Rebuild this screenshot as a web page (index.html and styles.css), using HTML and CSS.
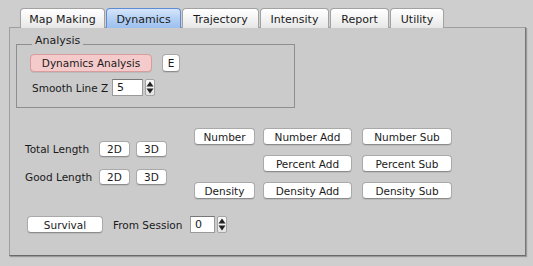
FILE: index.html
```html
<!DOCTYPE html>
<html>
<head>
<meta charset="utf-8">
<link rel="stylesheet" href="styles.css">
</head>
<body>
<div class="tabs">
  <div class="tab w-map">Map Making</div>
  <div class="tab sel w-dyn">Dynamics</div>
  <div class="tab w-traj">Trajectory</div>
  <div class="tab w-int">Intensity</div>
  <div class="tab w-rep">Report</div>
  <div class="tab w-util">Utility</div>
</div>
<div class="panel">
  <fieldset class="group">
    <legend>Analysis</legend>
    <div class="row r-analysis">
      <div class="btn pink w-da">Dynamics Analysis</div>
      <div class="btn w-e">E</div>
    </div>
    <div class="row r-smooth">
      <span class="lbl">Smooth Line Z</span>
      <div class="input w-in1">5</div>
      <div class="stepper"><svg width="8" height="15" viewBox="0 0 8 15"><path d="M4 1.5 L7.5 6.5 L0.5 6.5 Z" fill="#222"/><path d="M4 13.5 L7.5 8.5 L0.5 8.5 Z" fill="#222"/></svg></div>
    </div>
  </fieldset>
  <div class="mid">
    <div class="lengths">
      <div class="lrow"><span class="lbl w-lbl">Total Length</span><div class="btn sm">2D</div><div class="btn sm">3D</div></div>
      <div class="lrow"><span class="lbl w-lbl">Good Length</span><div class="btn sm">2D</div><div class="btn sm">3D</div></div>
    </div>
    <div class="ops">
      <div class="btn">Number</div>
      <div class="btn">Number Add</div>
      <div class="btn sub">Number Sub</div>
      <div></div>
      <div class="btn">Percent Add</div>
      <div class="btn sub">Percent Sub</div>
      <div class="btn">Density</div>
      <div class="btn">Density Add</div>
      <div class="btn sub">Density Sub</div>
    </div>
  </div>
  <div class="row r-bottom">
    <div class="btn w-surv">Survival</div>
    <span class="lbl">From Session</span>
    <div class="input w-in2">0</div>
    <div class="stepper"><svg width="8" height="15" viewBox="0 0 8 15"><path d="M4 1.5 L7.5 6.5 L0.5 6.5 Z" fill="#222"/><path d="M4 13.5 L7.5 8.5 L0.5 8.5 Z" fill="#222"/></svg></div>
  </div>
</div>
</body>
</html>
```
FILE: styles.css
```css
* { box-sizing: border-box; }
html, body { margin: 0; padding: 0; }
body {
  width: 533px;
  height: 266px;
  background: #cecece;
  font-family: "DejaVu Sans", sans-serif;
  font-size: 10.5px;
  color: #1a1a1a;
  overflow: hidden;
}
.tabs {
  display: flex;
  gap: 1px;
  padding: 8px 0 0 20px;
  height: 28px;
  position: relative;
  z-index: 1;
}
.tab {
  height: 20px;
  border: 1px solid #a2a2a2;
  border-bottom: none;
  border-radius: 4px 4px 0 0;
  background: linear-gradient(#ffffff, #f4f4f4 50%, #e6e6e6);
  display: flex;
  align-items: center;
  justify-content: center;
  font-size: 11px;
  padding-top: 2px;
}
.tab.sel {
  background: linear-gradient(#d6e6fb, #b4d0f4 50%, #9dc0ef);
  border-color: #5f8bd3;
}
.w-map { width: 85px; }
.w-dyn { width: 75px; }
.w-traj { width: 77px; }
.w-int { width: 69px; }
.w-rep { width: 59px; }
.w-util { width: 54px; }

.panel {
  margin: -1px 0 0 9px;
  width: 517px;
  height: 229px;
  border: 1px solid #9e9e9e;
  border-right-color: #777;
  border-bottom-color: #6a6a6a;
  box-shadow: 1px 1px 1px rgba(0,0,0,0.25);
  background: #cbcbcb;
  padding: 0 0 0 6px;
}
.group {
  margin: 6px 0 0 0;
  width: 279px;
  height: 74px;
  border: 1px solid #8e8e8e;
  padding: 0 0 0 13px;
}
.group legend {
  margin-left: 2px;
  padding: 0 3px 7px 3px;
  font-size: 11px;
  line-height: 13px;
}
.row { display: flex; align-items: center; }
.r-analysis { margin-top: 0; }
.r-smooth { margin-top: 7px; }
.lbl { white-space: nowrap; }
.r-smooth .lbl { margin-left: 2px; width: 80px; }

.btn {
  height: 17px;
  background: #fff;
  border: 1px solid #a9a9a9;
  border-bottom-color: #8c8c8c;
  border-radius: 4px;
  box-shadow: 0 1px 0 rgba(0,0,0,0.08);
  display: flex;
  align-items: center;
  justify-content: center;
  white-space: nowrap;
}
.pink {
  background: #f5caca;
  border-color: #d79c9c;
}
.w-da { width: 122px; height: 18px; }
.w-e { width: 18px; height: 18px; margin-left: 10px; }

.input {
  height: 17px;
  background: #fff;
  border: 1px solid #9a9a9a;
  border-top-color: #777;
  display: flex;
  align-items: center;
  padding-left: 4px;
  font-size: 11px;
}
.w-in1 { width: 31px; }
.w-in2 { width: 25px; }
.stepper {
  width: 10px;
  height: 17px;
  margin-left: 2px;
  background: linear-gradient(#fafafa, #e4e4e4);
  border: 1px solid #a5a5a5;
  border-radius: 2px;
  display: flex;
  align-items: center;
  justify-content: center;
}

.mid {
  display: flex;
  margin-top: 20px;
}
.lengths {
  padding: 13px 0 0 9px;
  display: flex;
  flex-direction: column;
  gap: 12px;
  width: 178px;
}
.lrow { display: flex; align-items: center; gap: 6px; }
.w-lbl { width: 68px; }
.btn.sm { width: 31px; height: 16px; }
.ops {
  display: grid;
  grid-template-columns: 61px 89px 92px;
  grid-auto-rows: 17px;
  column-gap: 8px;
  row-gap: 10px;
}
.btn.sub { width: 90px; justify-self: end; }

.r-bottom { margin-top: 17px; padding-left: 11px; }
.w-surv { width: 76px; margin-right: 10px; }
.r-bottom .lbl { width: 77px; }
```
